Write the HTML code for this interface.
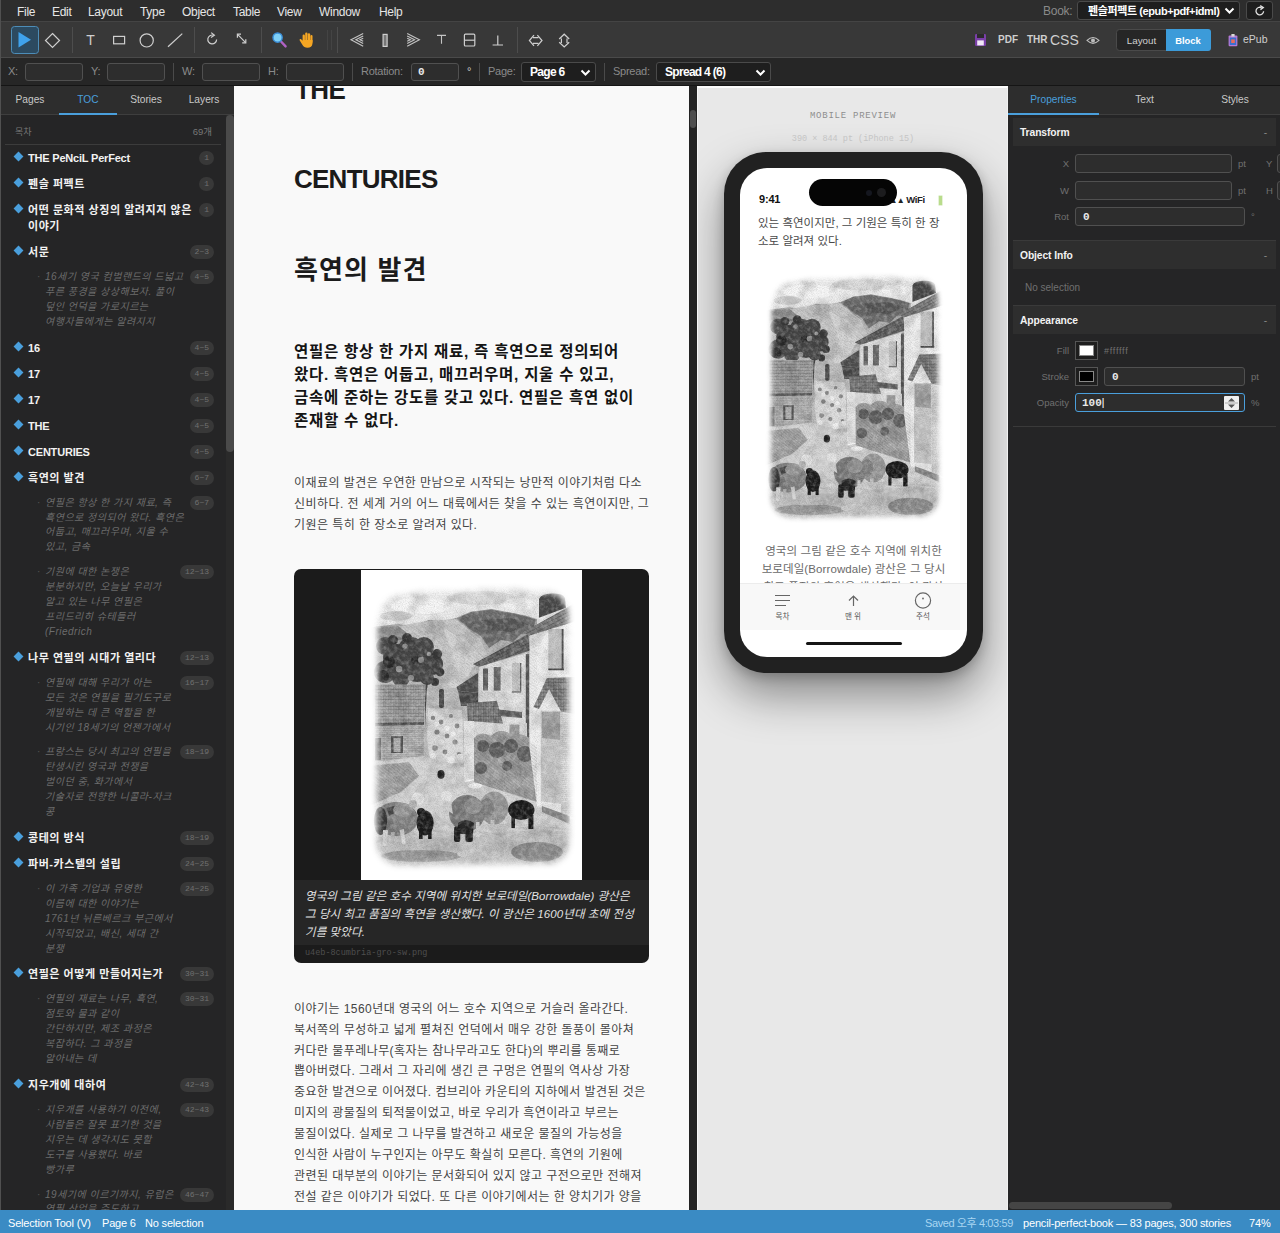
<!DOCTYPE html>
<html lang="ko">
<head>
<meta charset="utf-8">
<title>Book Layout Editor</title>
<style>
*{box-sizing:border-box;margin:0;padding:0}
html,body{width:1280px;height:1233px;overflow:hidden;background:#1e1e1e}
body{font-family:"Liberation Sans","Noto Sans CJK KR",sans-serif;font-size:11px;color:#d4d4d4;position:relative}
.abs{position:absolute}
/* ---------- menubar ---------- */
#menubar{left:0;top:0;width:1280px;height:22px;background:#2d2d2d;border-bottom:1px solid #444}
#menubar .mi{position:absolute;top:4px;font-size:12px;color:#e4e4e4;line-height:14px}

#menubar .mi{position:absolute;top:5px;font-size:12px;color:#e6e6e6;line-height:14px;white-space:nowrap;letter-spacing:-0.3px}
.sel{position:absolute;background:#1e1e1e;border:1px solid #4a4a4a;border-radius:3px;color:#fff;font-size:12px;font-weight:bold;white-space:nowrap}
.sel span{position:absolute;left:9px;top:2px;line-height:14px;letter-spacing:-0.45px}
.sel svg{position:absolute;right:4px;top:5px}
.lbl{position:absolute;color:#8a8a8a;font-size:11px;line-height:13px;white-space:nowrap;letter-spacing:-0.25px}
.inp{position:absolute;background:#2d2d2d;border:1px solid #505050;border-radius:3px;height:18px}
.inp span{position:absolute;left:6px;top:2px;font-family:"Liberation Mono","DejaVu Sans Mono",monospace;font-size:11px;font-weight:bold;color:#e8e8e8;line-height:12px}
.vsep{position:absolute;width:1px;background:#4a4a4a}
/* ---------- toolbar ---------- */
#toolbar{left:0;top:22px;width:1280px;height:36px;background:#383838;border-bottom:1px solid #4a4a4a}
/* ---------- control bar ---------- */
#ctrlbar{left:0;top:58px;width:1280px;height:28px;background:#262626;border-bottom:1px solid #151515}
/* ---------- left panel ---------- */
#left{left:0;top:86px;width:234px;height:1124px;background:#252526;overflow:hidden}

.tabs{position:absolute;left:0;top:0;height:29px;background:#2d2d2d;border-bottom:1px solid #3e3e3e}
.tab{position:absolute;top:0;height:29px;text-align:center;font-size:10.2px;line-height:28px;color:#c8c8c8}
.tab.on{color:#4a9fdc;border-bottom:2px solid #4a9fdc}
#toc{position:absolute;left:0;top:29px;width:226px}
#toc .hd{position:relative;height:30px;margin:0 5px 0 5px;border-bottom:1px solid #3c3c3c;color:#777;font-size:10px}
#toc .hd b{position:absolute;left:10px;top:11px;font-weight:normal;line-height:12px;font-size:9px}
#toc .hd i{position:absolute;right:9px;top:11px;font-style:normal;line-height:12px;font-size:9.5px}
.t1{position:relative;padding:5px 40px 5px 28px;font-size:11px;font-weight:bold;color:#f2f2f2;line-height:16px;letter-spacing:0.55px;white-space:nowrap}
.t1.en{letter-spacing:-0.2px}
.t1:before{content:"";position:absolute;left:15px;top:8px;width:7px;height:7px;background:#4a9fdc;transform:rotate(45deg)}
.t2{position:relative;padding:5px 40px 5px 45px;font-size:10px;font-style:italic;color:#6c6c6c;line-height:14.9px;white-space:nowrap;letter-spacing:0.5px}
.t2:before{content:"·";position:absolute;left:37px;top:5px;font-style:normal;color:#555}
.bd{position:absolute;right:12px;top:6px;height:14px;padding:0 5px;border-radius:7px;background:#383838;color:#707070;font:normal 8px/14px "Liberation Mono","DejaVu Sans Mono",monospace;letter-spacing:0}
.t2 .bd{top:5px}
#lscroll{position:absolute;left:226px;top:29px;width:8px;height:1095px;background:#2a2a2a}
#lscroll div{position:absolute;left:0;top:0px;width:8px;height:337px;background:#4a4a4a;border-radius:4px}
/* ---------- page ---------- */
#page{left:234px;top:86px;width:455px;height:1124px;background:#f9f9f9;overflow:hidden}
#pscroll{left:689px;top:86px;width:8px;height:1124px;background:#232323}

#page{font-family:"Liberation Sans","Noto Sans CJK KR",sans-serif;color:#1a1a1a}
#page .h{position:absolute;left:60px;font-weight:bold;font-size:26px;line-height:30px;white-space:nowrap;color:#1b1b1b}
#page .lead{position:absolute;left:60px;top:254.2px;font-weight:bold;font-size:15.5px;line-height:23px;white-space:nowrap;color:#141414;letter-spacing:0.73px}
#page .bp{position:absolute;left:60px;font-size:12px;line-height:20.9px;white-space:nowrap;color:#444;letter-spacing:0.44px}
#fig{position:absolute;left:60px;top:483px;width:355px;height:394px;background:#1b1b1b;border-radius:7px;overflow:hidden}
#fig .img{position:absolute;left:67px;top:1px;width:221px;height:310px;background:#fff}
#fig .cap{position:absolute;left:0;top:311px;width:355px;height:65px;background:#262626;color:#e2e2e2;font-style:italic;font-size:11.5px;line-height:17.8px;padding:8px 0 0 11px;white-space:nowrap;letter-spacing:0.09px}
#fig .fn{position:absolute;left:11px;top:379px;font:8.5px/10px "Liberation Mono","DejaVu Sans Mono",monospace;color:#4e4e4e;letter-spacing:0}
/* ---------- mobile ---------- */
#mobile{left:697px;top:86px;width:311px;height:1124px;background:#e8e8e8;overflow:hidden}

#mobile{border-left:1px solid #f6f6f6;border-top:2px solid #fcfcfc;border-right:1px solid #f0f0f0}
#mobile .mp1{position:absolute;left:0;width:310px;top:21.5px;text-align:center;font:9px/12px "Liberation Mono","DejaVu Sans Mono",monospace;color:#8e8e8e;letter-spacing:0.75px}
#mobile .mp2{position:absolute;left:0;width:310px;top:45px;text-align:center;font:8.5px/12px "Liberation Mono","DejaVu Sans Mono",monospace;color:#cacaca}
#phone{position:absolute;left:26px;top:64px;width:259px;height:521px;border-radius:42px;background:#212121;box-shadow:0 22px 46px rgba(0,0,0,.42),0 4px 12px rgba(0,0,0,.2)}
#screen{position:absolute;left:16px;top:16px;width:227px;height:489px;border-radius:27px;background:#fff;overflow:hidden}
#island{position:absolute;left:69px;top:11px;width:88px;height:27px;border-radius:14px;background:#050505;z-index:3}
#island i{position:absolute;border-radius:50%}
#screen .time{position:absolute;left:19px;top:24.8px;font-weight:bold;font-size:11px;line-height:13px;color:#111;letter-spacing:-0.2px}
#screen .sig{position:absolute;left:142.5px;top:26px;font-weight:bold;font-size:9.5px;line-height:12px;color:#222;white-space:nowrap;letter-spacing:-0.3px}
#screen .bat{position:absolute;left:198px;top:26.5px;width:5px;height:11px;border-radius:1.5px;background:#b9dc8c;border:1px solid #e6f2d8}
#screen .mt{position:absolute;left:18px;top:45.5px;font-size:11.5px;line-height:18.9px;color:#484848;white-space:nowrap;letter-spacing:0.02px}
#screen .mimg{position:absolute;left:17px;top:92px;width:193px;height:271px}
#screen .mcap{position:absolute;left:0;top:374px;width:227px;text-align:center;font-size:11.5px;line-height:18px;color:#6a6a6a;white-space:nowrap;letter-spacing:0.1px}
#mnav{position:absolute;left:0;top:415px;width:227px;height:47px;background:#f8f8f8;border-top:1px solid #ececec}
#mnav span{position:absolute;top:28px;width:40px;text-align:center;font-size:7.5px;line-height:10px;color:#555}
#homebar{position:absolute;left:66px;top:473.5px;width:96px;height:3.6px;border-radius:2px;background:#151515}
/* right panel */
#right .tab{font-size:10.2px}
.sec{position:absolute;left:5px;width:263px;height:28px;background:#2e2e2e;color:#f2f2f2;font-weight:bold;font-size:10.3px;line-height:29px;padding-left:7px;letter-spacing:-0.1px}
.sec:after{content:"-";position:absolute;right:9px;top:0;color:#888;font-weight:normal}
.hr{position:absolute;left:5px;width:263px;height:1px;background:#3a3a3a}
.rl{position:absolute;left:0;width:61px;text-align:right;color:#707070;font-size:9.5px;line-height:12px}
.ru{position:absolute;color:#707070;font-size:9.5px;line-height:12px}
.sw{position:absolute;left:67px;width:23px;height:19px;border:1px solid #555;background:#1e1e1e}
.sw i{position:absolute;left:3px;top:3px;width:15px;height:11px;border:1px solid #888}
#rscroll{position:absolute;left:1px;top:1116px;width:163px;height:7px;border-radius:4px;background:#454545}
#status span{position:absolute;top:6.5px;font-size:11px;line-height:13px;color:#fff;white-space:nowrap;letter-spacing:-0.18px}
/* ---------- right ---------- */
#right{left:1008px;top:86px;width:272px;height:1124px;background:#252526;overflow:hidden}
/* ---------- status ---------- */
#status{left:0;top:1210px;width:1280px;height:23px;background:#3a8bc4}
</style>
</head>
<body>
<svg width="0" height="0" style="position:absolute">
<defs>
<symbol id="drawing" viewBox="0 0 221 310">
<defs>
<linearGradient id="mtg" x1="0" y1="0" x2="0" y2="1"><stop offset="0" stop-color="#9a9a9a"/><stop offset="0.25" stop-color="#b8b8b8"/><stop offset="1" stop-color="#cccccc"/></linearGradient>
<pattern id="tile" width="5" height="3.2" patternUnits="userSpaceOnUse" patternTransform="rotate(-27)"><path d="M0 0.4 H5" stroke="#222" stroke-width="0.5" opacity=".55"/><path d="M1.2 0.4 V3.2 M3.8 0.4 V1.8" stroke="#ddd" stroke-width="0.4" opacity=".5"/></pattern>
<pattern id="tile2" width="5" height="3.4" patternUnits="userSpaceOnUse"><path d="M0 0.4 H5" stroke="#222" stroke-width="0.5" opacity=".5"/><path d="M1.2 0.4 V3.4 M3.8 0.4 V2" stroke="#e8e8e8" stroke-width="0.45" opacity=".55"/></pattern>
<pattern id="stone" width="7" height="4" patternUnits="userSpaceOnUse"><path d="M0 0.3 H7 M2 0.3 V2.2 M0 2.2 H7 M5 2.2 V4" stroke="#555" stroke-width="0.45" opacity=".55"/></pattern>
<pattern id="hatch" width="2.6" height="2.6" patternUnits="userSpaceOnUse" patternTransform="rotate(38)"><path d="M0 1 H2.6" stroke="#333" stroke-width="0.45" opacity=".45"/></pattern>
<pattern id="grass" width="3" height="5" patternUnits="userSpaceOnUse" patternTransform="rotate(8)"><path d="M1 5 V1.4 M2.2 4 V2.4" stroke="#555" stroke-width="0.45" opacity=".5"/></pattern>
<filter id="blot" x="0" y="0" width="100%" height="100%">
<feTurbulence type="fractalNoise" baseFrequency="0.06" numOctaves="3" seed="4"/>
<feColorMatrix type="matrix" values="0 0 0 0 0  0 0 0 0 0  0 0 0 0 0  2.2 0 0 0 -0.9"/>
</filter>
<filter id="dblur" x="-10%" y="-10%" width="120%" height="120%"><feGaussianBlur stdDeviation="0.7"/></filter>
<filter id="vblur" x="-20%" y="-20%" width="140%" height="140%"><feGaussianBlur stdDeviation="3.2"/></filter>
<filter id="grain" x="0" y="0" width="100%" height="100%">
<feTurbulence type="fractalNoise" baseFrequency="0.9" numOctaves="2" seed="7" result="n"/>
<feColorMatrix in="n" type="matrix" values="0 0 0 0 0  0 0 0 0 0  0 0 0 0 0  1.5 0 0 0 -0.55"/>
</filter>
<filter id="grainw" x="0" y="0" width="100%" height="100%">
<feTurbulence type="fractalNoise" baseFrequency="0.22" numOctaves="3" seed="21" result="n"/>
<feColorMatrix in="n" type="matrix" values="0 0 0 0 1  0 0 0 0 1  0 0 0 0 1  0 1.6 0 0 -0.66"/>
</filter>
<mask id="vig" maskUnits="userSpaceOnUse" x="0" y="0" width="221" height="310">
<rect width="221" height="310" fill="#000"/>
<path d="M34 26 Q60 20 100 22 Q150 16 176 22 L180 21 Q206 21 207 46 L208 270 Q207 290 190 293 L40 295 Q17 294 16 270 L17 60 Q18 32 34 26 Z" fill="#fff" filter="url(#vblur)"/>
</mask>
</defs>
<rect width="221" height="310" fill="#fff"/>
<g mask="url(#vig)">
<g filter="url(#dblur)">
<!-- sky -->
<rect x="8" y="12" width="208" height="60" fill="#ececec"/>
<ellipse cx="60" cy="36" rx="30" ry="8" fill="#f6f6f6"/>
<ellipse cx="120" cy="28" rx="34" ry="7" fill="#dcdcdc"/>
<ellipse cx="158" cy="34" rx="16" ry="6" fill="#f4f4f4"/>
<ellipse cx="35" cy="46" rx="16" ry="5" fill="#d2d2d2"/>
<!-- mountains -->
<path d="M8 58 L15 56.6 L37.7 54 L50 56.6 L68 50 L83 51.5 L95.5 47.8 L110.6 41.5 L130.7 39 L150.9 42.7 L163.4 45.3 L176 49 L176 200 L8 200 Z" fill="url(#mtg)"/>
<path d="M96 48.5 L110.6 42 L120 41 L130.7 39.5 L141 42 L150.9 43 L163 46 L174.7 49.5 L172 60 L160 64 L152 72 L140 70 L128 78 L120 66 L110 60 Z" fill="#707070"/><path d="M120 50 L150 48 L168 54 L150 62 L130 60 Z" fill="#5a5a5a"/>
<path d="M37 56 L68 51 L95 49 L118 68 L126 84 L112 96 L100 130 L66 130 L70 90 L50 66 Z" fill="#c8c8c8"/>
<path d="M82 58 L108 72 L122 88 L110 100 L98 124 L88 120 L94 90 Z" fill="#d6d6d6"/>
<path d="M14 58 L37 56 L52 68 L40 70 L14 72 Z" fill="#8e8e8e"/>
<!-- tree -->
<g fill="#484848">
<circle cx="24" cy="76" r="9"/><circle cx="36" cy="88" r="14"/><circle cx="50" cy="80" r="13"/><circle cx="63" cy="77" r="10"/>
<circle cx="71" cy="94" r="11"/><circle cx="56" cy="100" r="12"/><circle cx="24" cy="102" r="11"/><circle cx="40" cy="108" r="9"/><circle cx="66" cy="108" r="7"/>
</g>
<g fill="#2a2a2a"><circle cx="28" cy="92" r="6"/><circle cx="22" cy="106" r="6"/><circle cx="54" cy="90" r="4"/></g>
<g fill="#3e3e3e"><circle cx="76" cy="84" r="5"/><circle cx="79" cy="102" r="4.4"/><circle cx="46" cy="68" r="5"/><circle cx="32" cy="70" r="5"/><circle cx="74" cy="112" r="4"/></g><g fill="#9a9a9a"><circle cx="44" cy="76" r="2.6"/><circle cx="60" cy="90" r="3"/><circle cx="38" cy="99" r="3.2"/><circle cx="50" cy="108" r="3"/><circle cx="68" cy="84" r="2.2"/></g>
<rect x="64" y="110" width="2.4" height="70" fill="#4a4a4a"/>
<!-- lane & flock -->
<path d="M66 118 L100 118 L104 200 L62 196 Z" fill="#c2c2c2"/>
<path d="M67 138 L101 140 L103 192 L70 196 L66 170 Z" fill="#dcdcdc"/>
<g fill="#8a8a8a"><circle cx="72" cy="148" r="2.2"/><circle cx="80" cy="152" r="2.4"/><circle cx="90" cy="146" r="2"/><circle cx="96" cy="156" r="2.4"/><circle cx="76" cy="162" r="2.6"/><circle cx="86" cy="166" r="2.4"/><circle cx="94" cy="172" r="2.6"/><circle cx="74" cy="178" r="2.8"/><circle cx="84" cy="182" r="2.4"/><circle cx="98" cy="184" r="2"/></g>
<g fill="#f0f0f0"><circle cx="76" cy="154" r="2.4"/><circle cx="86" cy="158" r="2.6"/><circle cx="92" cy="164" r="2.4"/><circle cx="80" cy="172" r="2.8"/><circle cx="72" cy="186" r="3"/><circle cx="90" cy="190" r="3.6"/><circle cx="99" cy="187" r="3.2"/></g>
<rect x="78" y="119" width="5" height="19" rx="2" fill="#4c4c4c"/>
<!-- left barn -->
<path d="M14 114.4 L64.9 114.4 L62.9 153.4 L14 154.6 Z" fill="#989898"/>
<path d="M14 154.6 L62.9 153.4 L62.9 186 L14 192 Z" fill="#bebebe"/>
<rect x="30" y="166" width="12" height="17" fill="#555"/><rect x="32.5" y="168" width="7" height="14" fill="#bbb"/>
<rect x="14" y="168" width="6" height="22" fill="#666"/>
<path d="M14 153 L63 152 L63 155 L14 156 Z" fill="#5e5e5e"/>
<!-- road -->
<path d="M8 192 L62.9 186 L104 198 L104 212 L114 210 L176 232 L214 250 L214 304 L8 304 Z" fill="#d4d4d4"/>
<path d="M8 196 L48 192 L58 206 L40 222 L8 236 Z" fill="#ababab"/>
<path d="M60 200 L100 204 L96 226 L70 232 L56 220 Z" fill="#d4d4d4"/>
<!-- centre house -->
<path d="M118.2 96.8 L166 83 L166 178 L118.2 178 Z" fill="#e8e8e8"/>
<path d="M112 94.3 L167.2 64.1 L169 80.5 L118.2 96.8 Z" fill="#5c5c5c"/>
<rect x="122" y="98.5" width="5" height="22" fill="#666"/><rect x="132.8" y="97" width="6.8" height="23.6" fill="#707070"/>
<rect x="150.9" y="93" width="8.8" height="29" fill="#c8c8c8"/><path d="M150.9 122 H160 M159.7 93 V122" stroke="#555" stroke-width="1.2" fill="none"/>
<rect x="164.8" y="84" width="3.4" height="94" fill="#5a5a5a"/>
<path d="M95.5 117 L117 103 L117 123 L96.8 120.7 Z" fill="#575757"/>
<path d="M97 121 L117 123 L117 136 L100 136 Z" fill="#474747"/>
<path d="M113 150 L166 153 L166 178 L113 178 Z" fill="#dedede"/>
<path d="M137.8 139.5 L161 142 L161 148 L137.8 146 Z" fill="#666"/>
<rect x="148.4" y="154.6" width="10" height="14" fill="#9a9a9a"/>
<path d="M105.6 133.3 L135.8 130.8 L142 153.4 L106.9 150.9 Z" fill="#6e6e6e"/>
<path d="M103 151 L113 151 L113 209 L103 211 Z" fill="#e6e6e6"/>
<!-- bushes -->
<path d="M113 168 Q120 160 130 166 Q140 156 152 166 Q164 160 176 176 L176 232 L113 212 Z" fill="#a2a2a2"/>
<g fill="#666"><circle cx="122" cy="176" r="6"/><circle cx="136" cy="180" r="8"/><circle cx="150" cy="176" r="7"/><circle cx="164" cy="184" r="8"/><circle cx="120" cy="198" r="6"/><circle cx="146" cy="196" r="5"/></g>
<g fill="#b0b0b0"><circle cx="132" cy="204" r="6"/><circle cx="152" cy="212" r="8"/><circle cx="168" cy="214" r="7"/><circle cx="140" cy="190" r="3"/></g>
<!-- right house -->
<path d="M168.5 65.4 L214 52 L214 250 L176 236 L168.5 178 Z" fill="#efefef"/>
<path d="M161 62.9 L214 33 L214 51.5 L168.5 65.4 Z" fill="#7c7c7c"/>
<path d="M178 47.8 L178 29 Q180 24 190 23.6 Q202 23 204 28 L205 37.7 Z" fill="#4c4c4c"/>
<rect x="187.3" y="59" width="15.1" height="40.3" fill="#c2c2c2"/>
<path d="M187.3 99.3 H203 M201.6 59 V99.3" stroke="#484848" stroke-width="1.8" fill="none"/>
<path d="M179.8 140.8 L199.9 140.8 L199.9 233.8 L179.8 231.3 Z" fill="#c8c8c8"/>
<path d="M181 142 L199 142 L199 170 L181 168 Z" fill="#a2a2a2"/>
<path d="M200 141 L214 143 L214 248 L200 243 Z" fill="#dcdcdc"/>
<path d="M172.5 137 L186 108 L214 106.9 L214 144 L200 141.5 L188 119 L178 139 Z" fill="#787878"/>
<path d="M181 236 L208.7 246 L208.7 254 L181 242 Z" fill="#8a8a8a"/>
<!-- textures -->
<path d="M14 114.4 L64.9 114.4 L62.9 153.4 L14 154.6 Z" fill="url(#tile2)"/>
<path d="M14 154.6 L62.9 153.4 L62.9 186 L14 192 Z" fill="url(#stone)"/>
<path d="M112 94.3 L167.2 64.1 L169 80.5 L118.2 96.8 Z" fill="url(#tile)"/>
<path d="M161 62.9 L214 33 L214 51.5 L168.5 65.4 Z" fill="url(#tile)"/>
<path d="M105.6 133.3 L135.8 130.8 L142 153.4 L106.9 150.9 Z" fill="url(#tile2)"/>
<path d="M172.5 137 L186 108 L214 106.9 L214 144 L200 141.5 L188 119 L178 139 Z" fill="url(#tile2)"/>
<path d="M200 141 L214 143 L214 248 L200 243 Z" fill="url(#stone)" opacity=".6"/>
<path d="M8 58 L37.7 54 L68 50 L95.5 47.8 L130.7 39 L176 49 L176 130 L66 130 L14 72 Z" fill="url(#hatch)" opacity=".45"/>
<path d="M8 262 Q60 256 110 262 Q160 254 214 258 L214 304 L8 304 Z" fill="url(#grass)"/>
<path d="M113 168 Q140 156 176 176 L176 232 L113 212 Z" fill="url(#hatch)"/>
<path d="M8 196 L48 192 L58 206 L40 222 L8 236 Z" fill="url(#hatch)"/>
<!-- foreground grass -->
<path d="M8 268 Q60 260 110 266 Q160 258 214 262 L214 304 L8 304 Z" fill="#c2c2c2"/>
<ellipse cx="176" cy="282" rx="26" ry="10" fill="#8c8c8c"/>
<ellipse cx="60" cy="286" rx="40" ry="6" fill="#9a9a9a"/>
<ellipse cx="118" cy="284" rx="22" ry="5" fill="#c8c8c8"/>
<!-- sheep 3 -->
<ellipse cx="133" cy="238" rx="14.4" ry="16.6" fill="#9b9b9b"/>
<ellipse cx="126" cy="238" rx="7" ry="10" fill="#808080"/>
<rect x="129.5" y="250" width="3.8" height="13" fill="#cfcfcf"/><rect x="144.6" y="246" width="3.8" height="15" fill="#cfcfcf"/>
<ellipse cx="114.4" cy="215.9" rx="7" ry="2.6" fill="#f4f4f4"/>
<!-- sheep 2 -->
<ellipse cx="106" cy="243" rx="18" ry="18" fill="#7c7c7c"/>
<ellipse cx="112" cy="236" rx="9" ry="8" fill="#9a9a9a"/>
<path d="M97 253 Q105 247 113 253 L112 264 L97 264 Z" fill="#2c2c2c"/>
<rect x="93" y="256.5" width="6.3" height="15.6" rx="2" fill="#242424"/><rect x="104.4" y="256.5" width="7.5" height="15.6" rx="2" fill="#242424"/>
<rect x="115" y="252" width="3.6" height="15" fill="#d4d4d4"/>
<circle cx="85.5" cy="226.3" r="5.6" fill="#e4e4e4"/><path d="M82 230 L90 232 L92 244 L86 240 Z" fill="#d8d8d8"/>
<!-- lamb 2 -->
<ellipse cx="160.3" cy="240" rx="13.2" ry="10" fill="#1d1d1d"/>
<rect x="150.4" y="246" width="3.6" height="12" fill="#1d1d1d"/><rect x="167.4" y="245" width="5" height="14" fill="#1d1d1d"/>
<!-- sheep 1 -->
<ellipse cx="35.2" cy="249" rx="21.8" ry="17" fill="#868686"/>
<ellipse cx="19.5" cy="251" rx="6.6" ry="14" fill="#3c3c3c"/><path d="M26 238 Q40 232 50 240 L46 246 Q36 240 28 246 Z" fill="#4c4c4c"/>
<ellipse cx="42" cy="240" rx="10" ry="7" fill="#989898"/>
<path d="M22 260 L27 260 L26 276 L21.6 276 Z" fill="#dcdcdc"/><path d="M30 262 L34 262 L32.6 274 L29.6 274 Z" fill="#b4b4b4"/><path d="M38.6 260 L43 259 L44.6 274 L41 274 Z" fill="#dcdcdc"/>
<circle cx="56.6" cy="228.8" r="6.6" fill="#ececec"/><circle cx="52" cy="234" r="4" fill="#bdbdbd"/>
<!-- lamb 1 -->
<ellipse cx="64.1" cy="253" rx="8.6" ry="12.4" fill="#1e1e1e"/><circle cx="60" cy="242" r="4" fill="#1e1e1e"/>
<rect x="58" y="260" width="3.6" height="9" fill="#1e1e1e"/><rect x="67" y="260" width="3.6" height="9" fill="#1e1e1e"/>
<!-- dog -->
<ellipse cx="80" cy="204.4" rx="3.6" ry="4.4" fill="#232323"/>
</g>
<rect x="0" y="0" width="221" height="310" fill="#000" filter="url(#blot)" opacity="0.16"/>
<rect x="0" y="0" width="221" height="310" fill="#000" filter="url(#grain)" opacity="0.16"/>
<rect x="0" y="0" width="221" height="310" fill="#fff" filter="url(#grainw)" opacity="0.36"/>
</g>
</symbol>
</defs>
</svg>
<div id="menubar" class="abs">
<span class="mi" style="left:17px">File</span>
<span class="mi" style="left:52px">Edit</span>
<span class="mi" style="left:88px">Layout</span>
<span class="mi" style="left:140px">Type</span>
<span class="mi" style="left:182px">Object</span>
<span class="mi" style="left:233px">Table</span>
<span class="mi" style="left:277px">View</span>
<span class="mi" style="left:319px">Window</span>
<span class="mi" style="left:379px">Help</span>
<span class="lbl" style="left:1043px;top:4px;font-size:12px;line-height:14px">Book:</span>
<div class="sel" style="left:1077px;top:1px;width:163px;height:19px"><span style="font-size:11px;left:10px;top:2px;letter-spacing:-0.4px">펜슬퍼펙트 (epub+pdf+idml)</span><svg width="11" height="8" viewBox="0 0 11 8"><path d="M1.5 1.5 L5.5 5.5 L9.5 1.5" fill="none" stroke="#fff" stroke-width="2"/></svg></div>
<div class="sel" style="left:1246px;top:1px;width:27px;height:19px"><svg style="left:7px;top:3px;right:auto" width="12" height="12" viewBox="0 0 12 12"><path d="M9.6 6.2 A3.8 3.8 0 1 1 7.6 2.7" fill="none" stroke="#e0e0e0" stroke-width="1.3"/><path d="M6.2 0.6 L9.3 2.6 L6.4 4.6" fill="none" stroke="#e0e0e0" stroke-width="1.3"/></svg></div>
</div>
<div id="toolbar" class="abs">
<svg class="abs" style="left:0;top:0" width="1280" height="36" viewBox="0 22 1280 36" font-family="Liberation Sans, sans-serif">
<!-- selected tool -->
<rect x="11.5" y="26.5" width="27" height="27" rx="3" fill="#2c4a60" stroke="#4d8db8"/>
<path d="M18.5 32 L31 39.7 L18.5 47.5 Z" fill="#3fa2ec"/>
<g fill="none" stroke="#cfcfcf" stroke-width="1.2">
<path d="M52.5 33.5 L59.5 40.5 L52.5 47.5 L45.5 40.5 Z"/>
<rect x="113.6" y="36.4" width="11" height="7.4"/>
<circle cx="146.7" cy="40.4" r="6.6"/>
<path d="M168 46.8 L182.3 33.6"/>
<!-- rotate -->
<path d="M216.6 39.5 A4.4 4.4 0 1 1 213.4 35.2"/>
<path d="M211.2 32.6 L214.4 35.3 L211 37.6"/>
<!-- scale arrow -->
<path d="M237.6 34.4 L245.6 42.6"/>
<path d="M237.4 37.8 L237.4 34.2 L241 34.2"/>
<path d="M245.8 39.2 L245.8 42.8 L242.2 42.8"/>
<!-- distribute -->
<rect x="383.1" y="34.4" width="4" height="12" fill="#777"/>
<rect x="464.4" y="34.2" width="10.4" height="11.8" rx="1"/>
<path d="M464.4 40.2 H474.8"/>
<path d="M492.6 45 H503 M497.8 45 V35.4"/>
<!-- flip h -->
<path d="M533 37.6 H538.4 M533 43.4 H538.4 M534 35.2 L529.4 40.5 L534 45.8 M537.4 35.2 L542 40.5 L537.4 45.8"/>
<!-- flip v -->
<path d="M561.4 38.4 V43 M567 38.4 V43 M559.2 39 L564.2 34.2 L569.2 39 M559.2 42.2 L564.2 47 L569.2 42.2"/>
</g>
<!-- T glyphs -->
<text x="90.5" y="45" font-size="14" fill="#cfcfcf" text-anchor="middle">T</text>
<!-- align left / right nested arrows -->
<g fill="none" stroke="#c4c4c4" stroke-width="1.1">
<path d="M363.2 33.4 L351 39.8 L363.2 46.2"/>
<path d="M363.2 36 L355.8 39.8 L363.2 43.6"/>
<path d="M363.2 38.3 L360 39.8 L363.2 41.3"/>
<path d="M407.2 33.4 L419.4 39.8 L407.2 46.2"/>
<path d="M407.2 36 L414.6 39.8 L407.2 43.6"/>
<path d="M407.2 38.3 L410.4 39.8 L407.2 41.3"/>
<path d="M437 35.4 H446 M441.5 35.4 V43.8"/>
</g>
<!-- magnifier -->
<path d="M281 41.5 L285.6 46.4" stroke="#b062c4" stroke-width="2.4" stroke-linecap="round"/>
<circle cx="277.6" cy="37.6" r="4.6" fill="#7fd0f7" stroke="#3b8fd9" stroke-width="1.4"/>
<!-- hand -->
<g fill="#f5a623">
<rect x="302.6" y="34.6" width="2.3" height="8" rx="1.1"/>
<rect x="305.2" y="32.6" width="2.3" height="9" rx="1.1"/>
<rect x="307.8" y="33.2" width="2.3" height="9" rx="1.1"/>
<rect x="310.3" y="35" width="2.2" height="8" rx="1.1"/>
<path d="M302.6 40 H312.5 V43.4 Q312 47.8 307.4 47.8 Q304 47.6 302.2 44.4 L299.6 40.2 Q299.4 38.6 301 39 L302.6 41 Z"/>
</g>
<!-- separators -->
<g stroke="#4d4d4d" stroke-width="1">
<path d="M72.5 27 V53 M194.5 27 V53 M261.5 27 V53 M337.5 27 V53 M517.5 27 V53"/>
<path d="M327.5 30 V50 M331.5 30 V50" stroke="#444"/>
</g>
<!-- right side -->
<!-- floppy -->
<rect x="975" y="34" width="11" height="12" rx="1.2" fill="#7a3fa8"/>
<rect x="977" y="34" width="7" height="4" fill="#2b2b2b"/>
<rect x="977.2" y="40.4" width="6.6" height="5" fill="#f0e8f6"/>
<text x="998" y="43" font-size="10" font-weight="bold" fill="#cfcfcf">PDF</text>
<text x="1027" y="43" font-size="10" font-weight="bold" fill="#cfcfcf">THR</text>
<text x="1050" y="45" font-size="14" fill="#cfcfcf">CSS</text>
<!-- eye -->
<path d="M1087 40.4 Q1093 34.6 1099 40.4 Q1093 46.2 1087 40.4 Z" fill="none" stroke="#bdbdbd" stroke-width="1.1"/>
<circle cx="1093" cy="40.4" r="2" fill="#bdbdbd"/>
<!-- segmented -->
<rect x="1116.5" y="29.5" width="94" height="21" rx="3" fill="#262626" stroke="#4a4a4a"/>
<path d="M1166 29 H1208 Q1211 29 1211 32 V48 Q1211 51 1208 51 H1166 Z" fill="#3c9bd9"/>
<text x="1141.5" y="43.6" font-size="9.8" fill="#d0d0d0" text-anchor="middle">Layout</text>
<text x="1188" y="43.6" font-size="9.4" font-weight="bold" fill="#ffffff" text-anchor="middle">Block</text>
<!-- epub -->
<rect x="1228.6" y="35.4" width="8.8" height="10.8" rx="1" fill="#b77ad6"/>
<rect x="1229.8" y="37.6" width="6.4" height="7.4" fill="#3a6fd0"/>
<rect x="1231.4" y="34" width="3.2" height="2.6" fill="#d9d9d9"/>
<rect x="1231.2" y="39.4" width="3.6" height="3.6" fill="#e86a5a"/>
<text x="1243" y="43.4" font-size="10.5" fill="#cfcfcf">ePub</text>
</svg>
</div>
<div id="ctrlbar" class="abs">
<span class="lbl" style="left:8px;top:7px">X:</span><div class="inp" style="left:25px;top:5px;width:58px"></div>
<span class="lbl" style="left:91px;top:7px">Y:</span><div class="inp" style="left:107px;top:5px;width:58px"></div>
<div class="vsep" style="left:173px;top:5px;height:18px"></div>
<span class="lbl" style="left:182px;top:7px">W:</span><div class="inp" style="left:202px;top:5px;width:58px"></div>
<span class="lbl" style="left:268px;top:7px">H:</span><div class="inp" style="left:286px;top:5px;width:58px"></div>
<div class="vsep" style="left:352px;top:5px;height:18px"></div>
<span class="lbl" style="left:361px;top:7px">Rotation:</span><div class="inp" style="left:411px;top:5px;width:48px"><span>0</span></div>
<span class="lbl" style="left:467px;top:7px;color:#ccc">°</span>
<div class="vsep" style="left:479px;top:5px;height:18px"></div>
<span class="lbl" style="left:488px;top:7px">Page:</span>
<div class="sel" style="left:521px;top:4px;width:75px;height:20px"><span style="left:8px;letter-spacing:-0.7px">Page 6</span><svg width="11" height="8" viewBox="0 0 11 8" style="top:6px"><path d="M1.5 1.5 L5.5 5.5 L9.5 1.5" fill="none" stroke="#fff" stroke-width="2"/></svg></div>
<div class="vsep" style="left:604px;top:5px;height:18px"></div>
<span class="lbl" style="left:613px;top:7px">Spread:</span>
<div class="sel" style="left:656px;top:4px;width:115px;height:20px"><span style="left:8px;letter-spacing:-0.7px">Spread 4 (6)</span><svg width="11" height="8" viewBox="0 0 11 8" style="top:6px"><path d="M1.5 1.5 L5.5 5.5 L9.5 1.5" fill="none" stroke="#fff" stroke-width="2"/></svg></div>
</div>
<div id="left" class="abs">
<div class="tabs" style="width:234px">
<div class="tab" style="left:1px;width:58px">Pages</div>
<div class="tab on" style="left:59px;width:58px">TOC</div>
<div class="tab" style="left:117px;width:58px">Stories</div>
<div class="tab" style="left:175px;width:58px">Layers</div>
</div>
<div id="toc">
<div class="hd"><b>목차</b><i>69개</i></div>
<div class="t1 en">THE PeNciL PerFect<span class="bd">1</span></div>
<div class="t1">펜슬 퍼펙트<span class="bd">1</span></div>
<div class="t1">어떤 문화적 상징의 알려지지 않은<br>이야기<span class="bd">1</span></div>
<div class="t1">서문<span class="bd">2~3</span></div>
<div class="t2">16세기 영국 컴벌랜드의 드넓고<br>푸른 풍경을 상상해보자. 풀이<br>덮인 언덕을 가로지르는<br>여행자들에게는 알려지지<span class="bd">4~5</span></div>
<div class="t1 en">16<span class="bd">4~5</span></div>
<div class="t1 en">17<span class="bd">4~5</span></div>
<div class="t1 en">17<span class="bd">4~5</span></div>
<div class="t1 en">THE<span class="bd">4~5</span></div>
<div class="t1 en">CENTURIES<span class="bd">4~5</span></div>
<div class="t1">흑연의 발견<span class="bd">6~7</span></div>
<div class="t2">연필은 항상 한 가지 재료, 즉<br>흑연으로 정의되어 왔다. 흑연은<br>어둡고, 매끄러우며, 지울 수<br>있고, 금속<span class="bd">6~7</span></div>
<div class="t2">기원에 대한 논쟁은<br>분분하지만, 오늘날 우리가<br>알고 있는 나무 연필은<br>프리드리히 슈테들러<br>(Friedrich<span class="bd">12~13</span></div>
<div class="t1">나무 연필의 시대가 열리다<span class="bd">12~13</span></div>
<div class="t2">연필에 대해 우리가 아는<br>모든 것은 연필을 필기도구로<br>개발하는 데 큰 역할을 한<br>시기인 18세기의 언젠가에서<span class="bd">16~17</span></div>
<div class="t2">프랑스는 당시 최고의 연필을<br>탄생시킨 영국과 전쟁을<br>벌이던 중, 화가에서<br>기술자로 전향한 니콜라-자크<br>콩<span class="bd">18~19</span></div>
<div class="t1">콩테의 방식<span class="bd">18~19</span></div>
<div class="t1">파버-카스텔의 설립<span class="bd">24~25</span></div>
<div class="t2">이 가족 기업과 유명한<br>이름에 대한 이야기는<br>1761년 뉘른베르크 부근에서<br>시작되었고, 배신, 세대 간<br>분쟁<span class="bd">24~25</span></div>
<div class="t1">연필은 어떻게 만들어지는가<span class="bd">30~31</span></div>
<div class="t2">연필의 재료는 나무, 흑연,<br>점토와 물과 같이<br>간단하지만, 제조 과정은<br>복잡하다. 그 과정을<br>알아내는 데<span class="bd">30~31</span></div>
<div class="t1">지우개에 대하여<span class="bd">42~43</span></div>
<div class="t2">지우개를 사용하기 이전에,<br>사람들은 잘못 표기한 것을<br>지우는 데 생각지도 못할<br>도구를 사용했다. 바로<br>빵가루<span class="bd">42~43</span></div>
<div class="t2">19세기에 이르기까지, 유럽은<br>연필 산업을 주도하고<br>있었다. 그러나 미국은<span class="bd">46~47</span></div>
</div>
<div id="lscroll"><div></div></div>
</div>
<div id="page" class="abs">
<div class="h" style="top:-11.5px;letter-spacing:-0.6px;left:61px">THE</div>
<div class="h" style="top:78px;letter-spacing:-0.75px">CENTURIES</div>
<div class="h" style="top:169px;font-weight:700;letter-spacing:1.1px">흑연의 발견</div>
<div class="lead">연필은 항상 한 가지 재료, 즉 흑연으로 정의되어<br>왔다. 흑연은 어둡고, 매끄러우며, 지울 수 있고,<br>금속에 준하는 강도를 갖고 있다. 연필은 흑연 없이<br>존재할 수 없다.</div>
<div class="bp" style="top:387.2px">이재료의 발견은 우연한 만남으로 시작되는 낭만적 이야기처럼 다소<br>신비하다. 전 세계 거의 어느 대륙에서든 찾을 수 있는 흑연이지만, 그<br>기원은 특히 한 장소로 알려져 있다.</div>
<div id="fig">
<div class="img"><svg width="221" height="310" viewBox="0 0 221 310"><use href="#drawing"/></svg></div>
<div class="cap">영국의 그림 같은 호수 지역에 위치한 보로데일(Borrowdale) 광산은<br>그 당시 최고 품질의 흑연을 생산했다. 이 광산은 1600년대 초에 전성<br>기를 맞았다.</div>
<div class="fn">u4eb-8cumbria-gro-sw.png</div>
</div>
<div class="bp" style="top:912.7px">이야기는 1560년대 영국의 어느 호수 지역으로 거슬러 올라간다.<br>북서쪽의 무성하고 넓게 펼쳐진 언덕에서 매우 강한 돌풍이 몰아쳐<br>커다란 물푸레나무(혹자는 참나무라고도 한다)의 뿌리를 통째로<br>뽑아버렸다. 그래서 그 자리에 생긴 큰 구멍은 연필의 역사상 가장<br>중요한 발견으로 이어졌다. 컴브리아 카운티의 지하에서 발견된 것은<br>미지의 광물질의 퇴적물이었고, 바로 우리가 흑연이라고 부르는<br>물질이었다. 실제로 그 나무를 발견하고 새로운 물질의 가능성을<br>인식한 사람이 누구인지는 아무도 확실히 모른다. 흑연의 기원에<br>관련된 대부분의 이야기는 문서화되어 있지 않고 구전으로만 전해져<br>전설 같은 이야기가 되었다. 또 다른 이야기에서는 한 양치기가 양을</div>
</div>
<div id="pscroll" class="abs"><div style="position:absolute;left:1px;top:24px;width:6px;height:18px;border-radius:3px;background:#4e4e4e"></div></div>
<div id="mobile" class="abs">
<div class="mp1">MOBILE PREVIEW</div>
<div class="mp2">390 × 844 pt (iPhone 15)</div>
<div id="phone"><div id="screen">
<div id="island"><i style="left:57px;top:10.5px;width:6px;height:6px;background:#15171f"></i><i style="left:68px;top:9px;width:9px;height:9px;background:#1c1c1e"></i></div>
<div class="time">9:41</div>
<div class="sig"><span style="font-size:8px;letter-spacing:-0.8px">▲▲▲</span> WiFi</div>
<div class="bat"></div>
<div class="mt">있는 흑연이지만, 그 기원은 특히 한 장<br>소로 알려져 있다.</div>
<div class="mimg"><svg width="193" height="271" viewBox="0 0 221 310"><use href="#drawing"/></svg></div>
<div class="mcap">영국의 그림 같은 호수 지역에 위치한<br>보로데일(Borrowdale) 광산은 그 당시<br>최고 품질의 흑연을 생산했다. 이 광산</div>
<div id="mnav">
<svg class="abs" style="left:0;top:0" width="227" height="47" viewBox="0 0 227 47"><g fill="none" stroke="#666" stroke-width="1.2"><path d="M35 11.5 H50 M35 16.5 H50 M35 21.5 H46"/><path d="M113.5 22 V12.5 M109 16.5 L113.5 12 L118 16.5"/><circle cx="183" cy="16.5" r="7.6"/></g><circle cx="183" cy="14.5" r="0.9" fill="#666"/></svg>
<span style="left:22.5px">목차</span><span style="left:93px">맨 위</span><span style="left:163px">주석</span>
</div>
<div id="homebar"></div>
</div></div>
</div>
<div id="right" class="abs">
<div class="tabs" style="width:272px">
<div class="tab on" style="left:0;width:91px">Properties</div>
<div class="tab" style="left:91px;width:91px">Text</div>
<div class="tab" style="left:182px;width:90px">Styles</div>
</div>
<div class="sec" style="top:32px">Transform</div>
<span class="rl" style="top:72px">X</span><div class="inp" style="left:67px;top:68px;width:157px;height:19px"></div><span class="ru" style="left:230px;top:72px">pt</span><span class="ru" style="left:258px;top:72px">Y</span><div class="inp" style="left:269px;top:68px;width:20px;height:19px"></div>
<span class="rl" style="top:98.5px">W</span><div class="inp" style="left:67px;top:94.5px;width:157px;height:19px"></div><span class="ru" style="left:230px;top:98.5px">pt</span><span class="ru" style="left:258px;top:98.5px">H</span><div class="inp" style="left:269px;top:94.5px;width:20px;height:19px"></div>
<span class="rl" style="top:125px">Rot</span><div class="inp" style="left:67px;top:121px;width:170px;height:19px"><span style="left:7px;top:3px">0</span></div><span class="ru" style="left:243px;top:125px">°</span>
<div class="hr" style="top:154px"></div>
<div class="sec" style="top:155px">Object Info</div>
<span class="ru" style="left:17px;top:196px;font-size:10px">No selection</span>
<div class="hr" style="top:219px"></div>
<div class="sec" style="top:220px">Appearance</div>
<span class="rl" style="top:259px">Fill</span><div class="sw" style="top:255px"><i style="background:#fff"></i></div><span class="ru" style="left:96px;top:259px;font-size:9px;letter-spacing:0.75px">#ffffff</span>
<span class="rl" style="top:285px">Stroke</span><div class="sw" style="top:281px"><i style="background:#000"></i></div><div class="inp" style="left:96px;top:280.5px;width:141px;height:19px"><span style="left:7px;top:3px">0</span></div><span class="ru" style="left:243px;top:285px">pt</span>
<span class="rl" style="top:311px">Opacity</span><div class="inp" style="left:67px;top:306.5px;width:170px;height:19.5px;border-color:#4a9fdc"><span style="left:6px;top:3px">100<b style="font-weight:normal;color:#fff;margin-left:-2px">|</b></span>
<svg class="abs" style="left:148px;top:2px" width="15" height="14" viewBox="0 0 15 14"><rect width="15" height="14" rx="1" fill="#f0f0f0"/><path d="M4 5.5 L7.5 2 L11 5.5 Z M4 8.5 L7.5 12 L11 8.5 Z" fill="#555"/><path d="M1 7 H14" stroke="#999" stroke-width="0.8"/></svg></div><span class="ru" style="left:243px;top:311px">%</span>
<div class="hr" style="top:340px"></div>
<div id="rscroll"></div>
</div>
<div class="abs" style="left:0;top:0;width:1px;height:1210px;background:#505050"></div>
<div id="status" class="abs">
<span style="left:8px">Selection Tool (V)</span><span style="left:102px">Page 6</span><span style="left:145px">No selection</span>
<span style="left:925px;color:#a9d6f2;letter-spacing:-0.4px">Saved 오후 4:03:59</span><span style="left:1023px">pencil-perfect-book — 83 pages, 300 stories</span><span style="left:1249px">74%</span>
</div>
</body>
</html>
